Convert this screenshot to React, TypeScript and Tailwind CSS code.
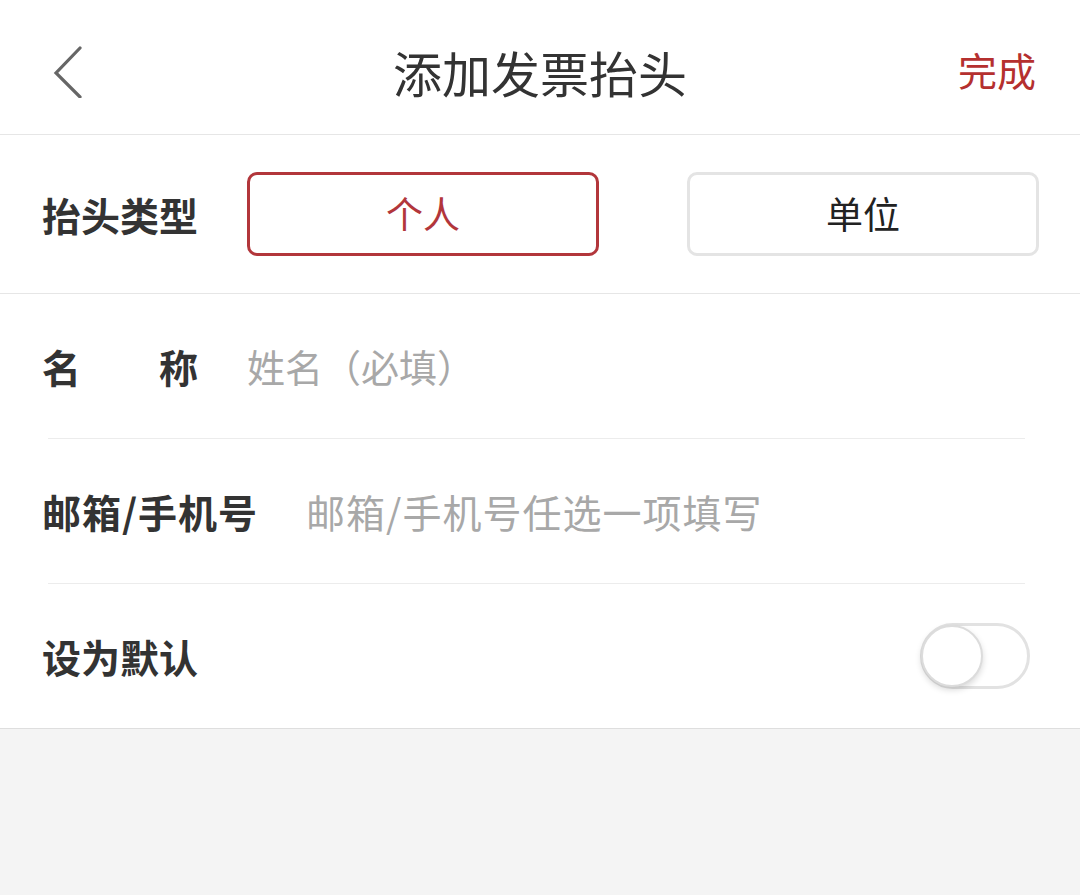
import React from "react";

const font = { fontFamily: '"Noto Sans CJK SC", "Noto Sans", sans-serif' };

export default function App() {
  return (
    <div className="w-[1080px] h-[895px] bg-[#f4f4f4] flex flex-col" style={font}>
      <div className="bg-white">
        {/* Header */}
        <div className="h-[135px] flex items-center justify-between px-[44px] border-b border-[#e6e6e6] relative">
          <svg width="40" height="60" viewBox="0 0 40 60" className="ml-[6px] mt-[2px]">
            <path d="M30 10 L6 35 L30 59" fill="none" stroke="#666" strokeWidth="3.2" strokeLinecap="round" strokeLinejoin="miter" />
          </svg>
          <div className="absolute left-0 right-0 top-[47px] text-center text-[49px] leading-none text-[#333] pointer-events-none">添加发票抬头</div>
          <div className="text-[39px] leading-none text-[#b5302f] mt-[4px]">完成</div>
        </div>

        {/* Type row */}
        <div className="h-[159px] flex items-center pl-[42px] pr-[41px] border-b border-[#e6e6e6]">
          <div className="text-[39px] font-bold leading-none text-[#333] w-[156px] shrink-0">抬头类型</div>
          <div className="flex-1 flex gap-[88px] ml-[49px]">
            <div className="flex-1 h-[84px] rounded-[10px] border-[3px] border-[#b2363b] flex items-center justify-center text-[37px] text-[#b2363b]">个人</div>
            <div className="flex-1 h-[84px] rounded-[10px] border-[3px] border-[#e4e4e4] flex items-center justify-center text-[37px] text-[#222]">单位</div>
          </div>
        </div>

        {/* Name row */}
        <div className="h-[144px] flex items-center pl-[42px]">
          <div className="w-[156px] flex justify-between text-[39px] font-bold leading-none text-[#333]">
            <span>名</span>
            <span>称</span>
          </div>
          <div className="ml-[49px] text-[38px] leading-none text-[#a8a8a8]">姓名（必填）</div>
        </div>
        <div className="mx-[48px] mr-[55px] h-px bg-[#ececec]" />

        {/* Email row */}
        <div className="h-[144px] flex items-center pl-[42px]">
          <div className="text-[39px] font-bold leading-none text-[#333] tracking-[1px]">邮箱/手机号</div>
          <div className="ml-[48px] text-[39px] leading-none text-[#a8a8a8] tracking-[1px]">邮箱/手机号任选一项填写</div>
        </div>
        <div className="mx-[48px] mr-[55px] h-px bg-[#ececec]" />

        {/* Default row */}
        <div className="h-[144px] flex items-center justify-between pl-[42px] pr-[50px]">
          <div className="text-[39px] font-bold leading-none text-[#333]">设为默认</div>
          <div className="w-[110px] h-[66px] rounded-full border-[3px] border-[#e2e2e2] bg-white relative">
            <div className="absolute left-[-2px] top-[-1px] w-[62px] h-[62px] rounded-full bg-white border-[2px] border-[#dcdcdc] shadow-[0_3px_6px_rgba(0,0,0,0.15)]" />
          </div>
        </div>
      </div>
      <div className="h-px bg-[#dedede]" />
      <div className="flex-1 bg-[#f4f4f4]" />
    </div>
  );
}
